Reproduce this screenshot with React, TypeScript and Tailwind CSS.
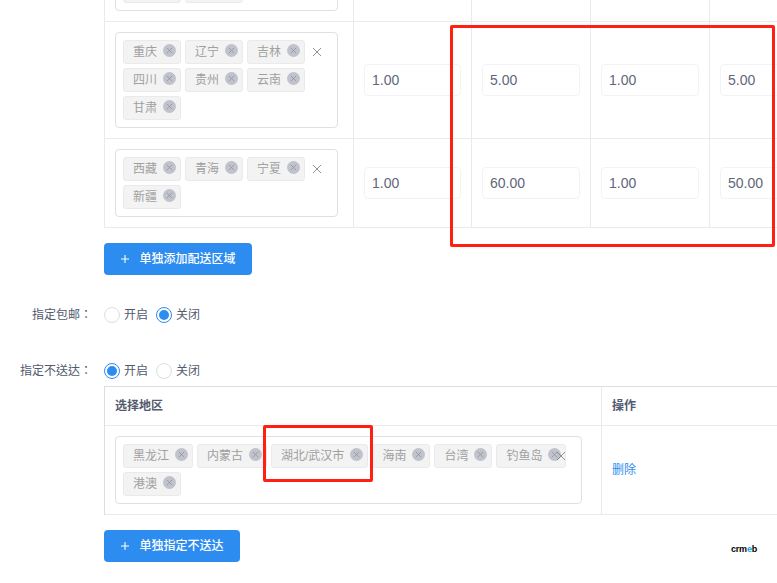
const secondRow = ["重庆", "辽宁", "吉林", "四川", "贵州", "云南", "甘肃"];
const thirdRow = ["西藏", "青海", "宁夏", "新疆"];
const blocked = ["黑龙江", "内蒙古", "湖北/武汉市", "海南", "台湾", "钓鱼岛", "港澳"];

function Tag({ label }: { label: string }) {
  return (
    <span className="flex h-6 items-center rounded-[3px] border border-[#e8eaec] bg-[#f3f3f3] pr-1 pl-[9px] text-xs text-[#a0a0a0]">
      <span className="whitespace-nowrap">{label}</span>
      <span className="mb-1 ml-1.5 grid h-[13px] w-[13px] place-items-center rounded-full bg-[#c0c3cc]">
        <svg viewBox="0 0 10 10" className="h-[9px] w-[9px] text-[#8f939e]" fill="none" stroke="currentColor" strokeWidth="0.9">
          <path d="M2 2l6 6M8 2l-6 6" />
        </svg>
      </span>
    </span>
  );
}

function AreaBox({ tags }: { tags: string[] }) {
  return (
    <div className="relative flex flex-wrap gap-1 rounded border border-[#dfe0e6] bg-white pt-[7px] pr-3 pb-[7px] pl-[7px]">
      {tags.map(tag => (
        <Tag key={tag} label={tag} />
      ))}
      <svg viewBox="0 0 10 10" className="absolute top-[14px] right-[15px] h-2.5 w-2.5 text-[#777]" fill="none" stroke="currentColor" strokeWidth="0.8">
        <path d="M1 1l8 8M9 1l-8 8" />
      </svg>
    </div>
  );
}

// the row above the fold: only the last line of its tags still shows
function ClippedBox() {
  return (
    <div className="flex h-[68px] items-end gap-1 rounded border border-[#dfe0e6] bg-white pb-[7px] pl-[7px]">
      <span className="h-6 w-[58px] rounded-[3px] border border-[#e8eaec] bg-[#f3f3f3]" />
      <span className="h-6 w-[58px] rounded-[3px] border border-[#e8eaec] bg-[#f3f3f3]" />
    </div>
  );
}

function PriceCell({ value, border = true }: { value?: string; border?: boolean }) {
  return (
    <div className={`flex items-center px-2.5 ${border ? "border-r border-[#e8eaec]" : ""}`}>
      {value ? (
        <div className="flex h-8 w-full items-center rounded border border-[#f3f3f5] pl-[7px] text-sm text-[#5f667a]">{value}</div>
      ) : null}
    </div>
  );
}

function PriceRow({ tags, values }: { tags?: string[]; values: string[] }) {
  return (
    <div className="grid grid-cols-[250px_118px_119px_119px_119px] border-b border-[#e8eaec]">
      <div className="border-x border-[#e8eaec] py-2.5 pr-[15px] pl-2.5">
        {tags ? <AreaBox tags={tags} /> : <ClippedBox />}
      </div>
      <PriceCell value={values[0]} />
      <PriceCell value={values[1]} />
      <PriceCell value={values[2]} />
      <PriceCell value={values[3]} border={false} />
    </div>
  );
}

function AddButton({ label, width }: { label: string; width: string }) {
  return (
    <button className={`ml-[104px] flex h-8 items-center justify-center gap-[9px] rounded bg-[#2d8cf0] text-xs font-medium text-white ${width}`}>
      <svg viewBox="0 0 10 10" className="h-2.5 w-2.5" fill="none" stroke="currentColor" strokeWidth="1.1">
        <path d="M5 1v8M1 5h8" />
      </svg>
      {label}
    </button>
  );
}

function Radio({ label, checked }: { label: string; checked?: boolean }) {
  return (
    <span className="flex items-center gap-1 text-xs text-[#515a6e]">
      <span className={`grid h-4 w-4 place-items-center rounded-full border bg-white ${checked ? "border-[#2d8cf0]" : "border-[#dcdee2]"}`}>
        {checked ? <span className="h-2.5 w-2.5 rounded-full bg-[#2d8cf0]" /> : null}
      </span>
      {label}
    </span>
  );
}

function SwitchRow({ label, on, className }: { label: string; on: boolean; className: string }) {
  return (
    <div className={`flex h-8 items-center ${className}`}>
      <div className="w-[92px] text-right font-['Liberation_Sans','Noto_Sans_CJK_TC',sans-serif] text-xs whitespace-nowrap text-[#515a6e]">{label}</div>
      <div className="ml-3 flex gap-2">
        <Radio label="开启" checked={on} />
        <Radio label="关闭" checked={!on} />
      </div>
    </div>
  );
}

export default function App() {
  return (
    <div className="relative h-[583px] w-[777px] overflow-hidden bg-white font-['Liberation_Sans','Noto_Sans_CJK_SC',sans-serif]">
      <div className="mt-[-67px] ml-[104px] w-[725px]">
        <PriceRow values={[]} />
        <PriceRow tags={secondRow} values={["1.00", "5.00", "1.00", "5.00"]} />
        <PriceRow tags={thirdRow} values={["1.00", "60.00", "1.00", "50.00"]} />
      </div>

      <div className="mt-[15px]">
        <AddButton label="单独添加配送区域" width="w-[148px]" />
      </div>

      <SwitchRow label="指定包邮：" on={false} className="mt-6" />
      <SwitchRow label="指定不送达：" on={true} className="mt-6 -mb-px" />

      <div className="ml-[104px] w-[725px] border-t border-l border-[#dcdee2]">
        <div className="grid h-[39px] grid-cols-[497px_1fr] border-b border-[#e8eaec] text-xs font-semibold text-[#515a6e]">
          <div className="flex items-center border-r border-[#e8eaec] pl-2.5">选择地区</div>
          <div className="flex items-center pl-2.5">操作</div>
        </div>
        <div className="grid grid-cols-[497px_1fr] border-b border-[#e8eaec]">
          <div className="border-r border-[#e8eaec] py-2.5 pr-[19px] pl-2.5">
            <AreaBox tags={blocked} />
          </div>
          <div className="flex items-center pl-2.5 text-xs text-[#2d8cf0]">删除</div>
        </div>
      </div>

      <div className="mt-[15px]">
        <AddButton label="单独指定不送达" width="w-[136px]" />
      </div>

      {/* annotation boxes and watermark sit over the page */}
      <div className="absolute top-[25px] left-[450px] h-[222px] w-[325px] rounded-[2px] border-[3px] border-[#ff2012]" />
      <div className="absolute top-[425px] left-[263px] h-[57px] w-[110px] rounded-[2px] border-[3px] border-[#ff2012]" />
      <div className="absolute top-[543px] left-[731px] text-[9px] font-bold tracking-[-0.2px] text-black">
        crm<span className="text-[#1a9fe8]">e</span>b
      </div>
    </div>
  );
}
